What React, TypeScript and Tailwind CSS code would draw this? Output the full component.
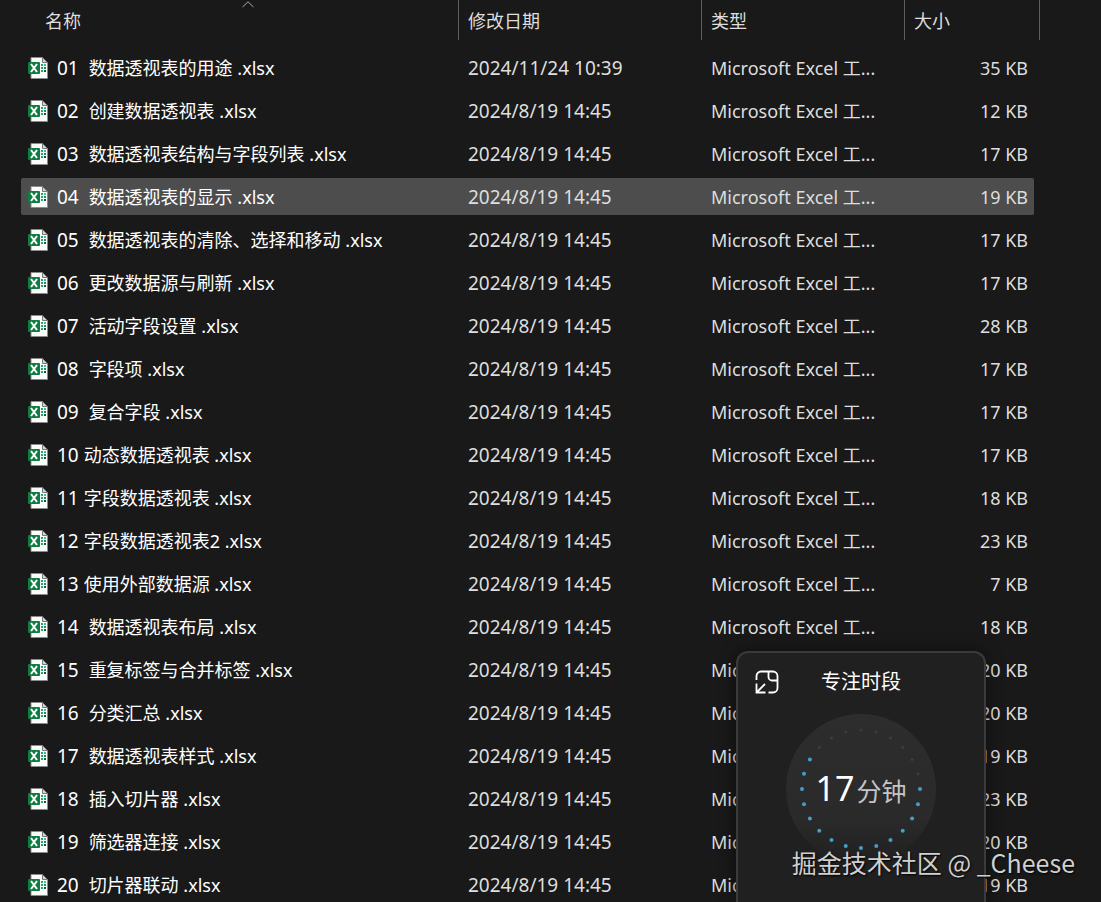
const files = [
  { no: "01  ", name: "数据透视表的用途 .xlsx", date: "2024/11/24 10:39", size: 35 },
  { no: "02  ", name: "创建数据透视表 .xlsx", date: "2024/8/19 14:45", size: 12 },
  { no: "03  ", name: "数据透视表结构与字段列表 .xlsx", date: "2024/8/19 14:45", size: 17 },
  { no: "04  ", name: "数据透视表的显示 .xlsx", date: "2024/8/19 14:45", size: 19, selected: true },
  { no: "05  ", name: "数据透视表的清除、选择和移动 .xlsx", date: "2024/8/19 14:45", size: 17 },
  { no: "06  ", name: "更改数据源与刷新 .xlsx", date: "2024/8/19 14:45", size: 17 },
  { no: "07  ", name: "活动字段设置 .xlsx", date: "2024/8/19 14:45", size: 28 },
  { no: "08  ", name: "字段项 .xlsx", date: "2024/8/19 14:45", size: 17 },
  { no: "09  ", name: "复合字段 .xlsx", date: "2024/8/19 14:45", size: 17 },
  { no: "10 ", name: "动态数据透视表 .xlsx", date: "2024/8/19 14:45", size: 17 },
  { no: "11 ", name: "字段数据透视表 .xlsx", date: "2024/8/19 14:45", size: 18 },
  { no: "12 ", name: "字段数据透视表2 .xlsx", date: "2024/8/19 14:45", size: 23 },
  { no: "13 ", name: "使用外部数据源 .xlsx", date: "2024/8/19 14:45", size: 7 },
  { no: "14  ", name: "数据透视表布局 .xlsx", date: "2024/8/19 14:45", size: 18 },
  { no: "15  ", name: "重复标签与合并标签 .xlsx", date: "2024/8/19 14:45", size: 20 },
  { no: "16  ", name: "分类汇总 .xlsx", date: "2024/8/19 14:45", size: 20 },
  { no: "17  ", name: "数据透视表样式 .xlsx", date: "2024/8/19 14:45", size: 19 },
  { no: "18  ", name: "插入切片器 .xlsx", date: "2024/8/19 14:45", size: 23 },
  { no: "19  ", name: "筛选器连接 .xlsx", date: "2024/8/19 14:45", size: 20 },
  { no: "20  ", name: "切片器联动 .xlsx", date: "2024/8/19 14:45", size: 19 },
];

const ExcelIcon = () => (
  <svg width="20" height="22" viewBox="0 0 20 22" className="shrink-0" aria-hidden="true">
    <path d="M3 .5h11.5l5 5v16H3z" fill="#fbfdfb" stroke="#8b8b8b" />
    <path d="M14.5.5v5h5z" fill="#d4d4d4" stroke="#777" />
    <path d="M13 7h2v2h-2zM13 10h2v2h-2zM13 13h2v2h-2z" fill="#2f9f78" />
    <path d="M16 7h2v2h-2z" fill="#36c292" />
    <path d="M16 10h2v2h-2z" fill="#258c61" />
    <path d="M16 13h2v2h-2z" fill="#185c37" />
    <rect y="5" width="12" height="12" rx="1" fill="#107c41" />
    <path d="M3 7l6 8M9 7l-6 8" stroke="#fff" strokeWidth="2" />
  </svg>
);

const ExpandIcon = () => (
  <svg width="24" height="24" viewBox="0 0 24 24" fill="none" stroke="#fff" strokeWidth="1.8" aria-hidden="true">
    <path d="M1.5 10V6A4.5 4.5 0 0 1 6 1.5h12A4.5 4.5 0 0 1 22.5 6v12a4.5 4.5 0 0 1-4.5 4.5h-4.500" />
    <path d="M13.5 1.5V7a3.5 3.5 0 0 0 3.5 3.5h5.5" />
    <path d="M10 14l-8 8M1.5 13.5v9h9" />
  </svg>
);

const TimerDial = () => (
  <svg width="152" height="152" viewBox="0 0 152 152" className="absolute inset-0" aria-hidden="true">
    <defs>
      <linearGradient id="dial" x1="0" y1="0" x2="0" y2="1">
        <stop offset="0" stopColor="#2d2d2d" />
        <stop offset="0.7" stopColor="#2a2a2a" />
        <stop offset="1" stopColor="#202020" />
      </linearGradient>
    </defs>
    <circle cx="76" cy="76" r="75" fill="url(#dial)" />
    {Array.from({ length: 24 }, (_, i) => {
      const angle = (i * Math.PI) / 12;
      const active = i >= 6 && i <= 20;
      return (
        <circle
          key={i}
          cx={76 + 59 * Math.sin(angle)}
          cy={76 - 59 * Math.cos(angle)}
          r={active ? 2 : 1.5}
          fill={active ? "#429fc6" : "#3d3d3d"}
        />
      );
    })}
  </svg>
);

const FocusTimer = () => (
  <section
    aria-label="专注时段"
    className="absolute right-[115px] bottom-0 h-[251px] w-[250px] rounded-t-xl border-2 border-b-0 border-[#3b3b3b] bg-[#202020] shadow-[0_0_16px_rgba(0,0,0,0.5)]"
  >
    <header className="grid grid-cols-[24px_1fr_24px] items-center px-[17px] pt-[13px]">
      <button type="button" aria-label="还原">
        <ExpandIcon />
      </button>
      <h2 className="text-center text-xl leading-8 text-white">专注时段</h2>
    </header>
    <div className="relative mx-auto mt-[15px] flex size-[152px] items-center justify-center">
      <TimerDial />
      <p className="relative flex items-baseline gap-0.5">
        <span className="text-[34px] leading-10 text-white">17</span>
        <span className="text-[25px] leading-10 text-[#c4c4c4]">分钟</span>
      </p>
    </div>
  </section>
);

export default function App() {
  return (
    <main className="relative h-screen overflow-hidden bg-[#191919] pr-[61px] font-['Noto_Sans','Noto_Sans_CJK_SC',sans-serif] text-lg leading-7 text-[#dedede]">
      <table className="w-full table-fixed border-collapse whitespace-pre">
        <colgroup>
          <col />
          <col className="w-[243px]" />
          <col className="w-[203px]" />
          <col className="w-[136px]" />
        </colgroup>
        <thead>
          <tr className="text-left">
            <th aria-sort="ascending" className="p-0 pb-1.5 font-normal">
              <div className="relative flex h-10 items-center pt-0.5 pl-[45px]">
                名称
                <svg
                  width="12"
                  height="7"
                  viewBox="0 0 12 7"
                  fill="none"
                  stroke="#a8a8a8"
                  className="absolute top-px left-[242px]"
                  aria-hidden="true"
                >
                  <path d="M.5 6L6 .8 11.5 6" />
                </svg>
              </div>
            </th>
            <th className="p-0 pb-1.5 font-normal">
              <div className="flex h-10 items-center border-l border-[#5c5c5c] pt-0.5 pl-[9px]">修改日期</div>
            </th>
            <th className="p-0 pb-1.5 font-normal">
              <div className="flex h-10 items-center border-l border-[#5c5c5c] pt-0.5 pl-[9px]">类型</div>
            </th>
            <th className="p-0 pb-1.5 font-normal">
              <div className="flex h-10 items-center border-x border-[#5c5c5c] pt-0.5 pl-[9px]">大小</div>
            </th>
          </tr>
        </thead>
        <tbody>
          {files.map((file) => {
            const bg = file.selected ? "bg-[#4d4d4d]" : "";
            return (
              <tr key={file.no}>
                <td className="p-0 py-[3px] pl-[21px]">
                  <div className={`flex h-[37px] items-center gap-[9px] rounded-l-xs pl-[7px] text-white ${bg}`}>
                    <ExcelIcon />
                    <span>
                      <span className="text-[19px]">{file.no}</span>
                      {file.name}
                    </span>
                  </div>
                </td>
                <td className="p-0 py-[3px]">
                  <div className={`flex h-[37px] items-center pl-2.5 text-[19px] ${bg}`}>{file.date}</div>
                </td>
                <td className="p-0 py-[3px]">
                  <div className={`flex h-[37px] items-center pl-2.5 ${bg}`}>Microsoft Excel 工...</div>
                </td>
                <td className="p-0 py-[3px] pr-1.5">
                  <div className={`flex h-[37px] items-center justify-end rounded-r-xs pr-1.5 ${bg}`}>
                    {file.size} KB
                  </div>
                </td>
              </tr>
            );
          })}
        </tbody>
      </table>
      <FocusTimer />
      <p className="absolute right-[26px] bottom-[22px] font-['Noto_Sans_CJK_SC',sans-serif] text-[25px] leading-9 text-[#d0d0d0] [text-shadow:1px_1px_2px_#000]">
        掘金技术社区 @ _Cheese
      </p>
    </main>
  );
}
